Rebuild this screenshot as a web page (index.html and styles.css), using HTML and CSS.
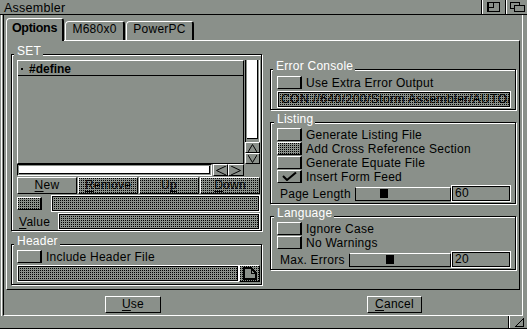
FILE: index.html
```html
<!DOCTYPE html>
<html lang="en">
<head>
    <meta charset="UTF-8">
    <meta name="viewport" content="width=device-width, initial-scale=1.0">
    <title>Assembler</title>
    <link rel="stylesheet" href="styles.css">
</head>
<body>

<div class="window">
    <div class="titlebar">
        <div class="title">Assembler</div>
        <div class="gadget zoom">
            <svg width="13" height="10" viewBox="0 0 13 10" shape-rendering="crispEdges">
                <rect x="0.5" y="0.5" width="12" height="9" fill="none" stroke="#000"/>
                <rect x="0.5" y="0.5" width="6" height="5" fill="none" stroke="#000"/>
                <line x1="1.5" y1="1" x2="1.5" y2="9" stroke="#000"/>
            </svg>
        </div>
        <div class="gadget depth">
            <svg width="15" height="10" viewBox="0 0 15 10" shape-rendering="crispEdges">
                <rect x="0.5" y="0.5" width="9" height="6" fill="none" stroke="#000"/>
                <rect x="4.5" y="3.5" width="10" height="6" fill="#8a908a" stroke="#000"/>
            </svg>
        </div>
    </div>

    <div class="client">
        <div class="content">
            <div class="tabs">
                <div class="tab active">Options</div>
                <div class="tab t2">M680x0</div>
                <div class="tab t3">PowerPC</div>
            </div>

            <div class="panel">
                <!-- left column -->
                <div class="col">
                    <div class="group-title">SET</div>
                    <div class="group set">
                        <div class="listarea">
                            <div class="list">
                                <div class="list-head"><span class="dot"></span>#define</div>
                            </div>
                            <div class="vscroll">
                                <div class="vtrack"><div class="vknob"></div></div>
                                <div class="arrow">
                                    <svg width="9" height="8" viewBox="0 0 9 8"><polyline points="0,8 4.5,0.5 9,8" fill="none" stroke="#000"/></svg>
                                </div>
                                <div class="arrow">
                                    <svg width="9" height="8" viewBox="0 0 9 8"><polyline points="0,0 4.5,7.5 9,0" fill="none" stroke="#000"/></svg>
                                </div>
                            </div>
                            <div class="hscroll"><div class="hknob"></div></div>
                            <div class="arrow left">
                                <svg width="10" height="9" viewBox="0 0 10 9"><polyline points="10,0 0.5,4.5 10,9" fill="none" stroke="#000"/></svg>
                            </div>
                            <div class="arrow right">
                                <svg width="10" height="9" viewBox="0 0 10 9"><polyline points="0,0 9.5,4.5 0,9" fill="none" stroke="#000"/></svg>
                            </div>
                        </div>

                        <div class="btnrow">
                            <div class="btn"><u>N</u>ew</div>
                            <div class="btn dim"><u>R</u>emove</div>
                            <div class="btn dim">U<u>p</u></div>
                            <div class="btn dim"><u>D</u>own</div>
                        </div>

                        <div class="frow">
                            <div class="check dim"></div>
                            <div class="field dim wide"></div>
                        </div>
                        <div class="frow">
                            <div class="flabel"><u>V</u>alue</div>
                            <div class="field dim"></div>
                        </div>
                    </div>

                    <div class="group-title gap">Header</div>
                    <div class="group header">
                        <div class="crow">
                            <div class="check"></div>
                            <span>Include Header File</span>
                        </div>
                        <div class="frow pop">
                            <div class="field dim"></div>
                            <div class="popbtn dim">
                                <svg width="14" height="13" viewBox="0 0 14 13" shape-rendering="crispEdges">
                                    <path d="M1 1 H8 L13 6 V12 H1 Z" fill="#8a908a" stroke="#000" stroke-width="2"/>
                                    <path d="M8 1 V6 H13" fill="none" stroke="#000" stroke-width="1"/>
                                </svg>
                            </div>
                        </div>
                    </div>
                </div>

                <!-- right column -->
                <div class="col">
                    <div class="group-title">Error Console</div>
                    <div class="group rgroup errors">
                        <div class="crow">
                            <div class="check"></div>
                            <span>Use Extra Error Output</span>
                        </div>
                        <div class="field dim con">CON://640/200/Storm Assembler/AUTO/</div>
                    </div>

                    <div class="group-title gap-r">Listing</div>
                    <div class="group rgroup listing">
                        <div class="crow">
                            <div class="check"></div>
                            <span>Generate Listing File</span>
                        </div>
                        <div class="crow">
                            <div class="check dim"></div>
                            <span>Add Cross Reference Section</span>
                        </div>
                        <div class="crow">
                            <div class="check"></div>
                            <span>Generate Equate File</span>
                        </div>
                        <div class="crow">
                            <div class="check">
                                <svg width="15" height="9" viewBox="0 0 15 9"><polyline points="1,4 5,8 14,0.5" fill="none" stroke="#000" stroke-width="2"/></svg>
                            </div>
                            <span>Insert Form Feed</span>
                        </div>
                        <div class="srow">
                            <span class="slabel">Page Length</span>
                            <div class="slider"><div class="knob" style="margin-left: 24px"></div></div>
                            <div class="field num">60</div>
                        </div>
                    </div>

                    <div class="group-title gap-r">Language</div>
                    <div class="group rgroup language">
                        <div class="crow">
                            <div class="check"></div>
                            <span>Ignore Case</span>
                        </div>
                        <div class="crow">
                            <div class="check"></div>
                            <span>No Warnings</span>
                        </div>
                        <div class="srow">
                            <span class="slabel">Max. Errors</span>
                            <div class="slider"><div class="knob" style="margin-left: 36px"></div></div>
                            <div class="field num">20</div>
                        </div>
                    </div>
                </div>
            </div>

            <div class="actions">
                <div class="btn use"><u>U</u>se</div>
                <div class="btn cancel"><u>C</u>ancel</div>
            </div>
        </div>
    </div>

    <div class="bottombar">
        <div class="sizer">
            <svg width="9" height="9" viewBox="0 0 9 9" shape-rendering="crispEdges"><path d="M0.5 8.5 H8.5 V0.5 Z" fill="none" stroke="#000"/></svg>
        </div>
    </div>
</div>

</body>
</html>
```

FILE: styles.css
```css
* {
    box-sizing: border-box;
}

body {
    margin: 0;
    background-color: #8a908a;
    font-family: "Liberation Sans", Arial, sans-serif;
    font-size: 12px;
    line-height: 12px;
    letter-spacing: 0.25px;
    color: #000;
}

u {
    text-decoration-thickness: 1px;
    text-underline-offset: 2px;
}

.window {
    width: 527px;
    height: 329px;
    overflow: hidden;
}

/* title bar */
.titlebar {
    display: flex;
    height: 15px;
    border-bottom: 1px solid #000;
}

.title {
    flex: 1;
    padding: 2px 0 0 4px;
    font-size: 12.5px;
}

.gadget {
    display: flex;
    align-items: center;
    justify-content: center;
    border-left: 1px solid #000;
    box-shadow: inset 1px 0 #fff;
}

.gadget.zoom {
    width: 24px;
}

.gadget.depth {
    width: 22px;
    padding-left: 1px;
}

/* window body */
.client {
    display: flex;
    height: 301px;
    margin-left: 1px;
    border-left: 1px solid #fff;
    padding: 0 4px 0 1px;
}

.content {
    flex: 1;
    display: flex;
    flex-direction: column;
    border-left: 1px solid #000;
    border-right: 1px solid #fff;
    border-bottom: 1px solid #fff;
    padding: 3px 0 0 0;
}

/* tabs */
.tabs {
    display: flex;
    align-items: flex-end;
    gap: 1px;
    height: 22px;
    margin: 0 2px;
}

.tab {
    height: 19px;
    border: 1px solid #fff;
    border-right: 2px solid #000;
    border-bottom: 0;
    border-radius: 4px 3px 0 0;
    padding-top: 1px;
    text-align: center;
}

.tab.active {
    position: relative;
    z-index: 1;
    width: 58px;
    height: 23px;
    margin-bottom: -1px;
    padding-top: 3px;
    background-color: #8a908a;
    font-weight: bold;
    font-size: 12.5px;
    letter-spacing: -0.3px;
}

.tab.t2 {
    width: 60px;
}

.tab.t3 {
    width: 68px;
}

.panel {
    display: grid;
    grid-template-columns: 251px 246px;
    column-gap: 8px;
    height: 250px;
    margin: 0 2px;
    padding: 0 3px 0 4px;
    border: 1px solid;
    border-color: #fff #000 #000 #fff;
}

.col {
    display: flex;
    flex-direction: column;
    align-self: center;
}

/* groups */
.group-title {
    position: relative;
    z-index: 1;
    align-self: flex-start;
    height: 12px;
    margin: 0 0 -3px 3px;
    padding: 0 2px 0 3px;
    background-color: #8a908a;
    color: #fff;
}

.group-title.gap {
    margin-top: 4px;
}

.group-title.gap-r {
    margin-top: 3px;
    margin-left: 4px;
}

.group {
    display: flex;
    flex-direction: column;
    border: 1px solid #000;
    box-shadow: inset 1px 1px #fff, 1px 1px #fff;
}

.group.set {
    height: 177px;
    padding: 5px 1px 0 5px;
    gap: 1px;
}

.group.header {
    height: 41px;
    padding: 5px 1px 2px 5px;
    gap: 2px;
}

.rgroup {
    padding: 5px 4px 2px 6px;
    gap: 1px;
}

.group.errors {
    height: 41px;
    padding-top: 6px;
}

.group.listing {
    height: 82px;
}

.group.language {
    height: 54px;
}

/* list */
.listarea {
    display: grid;
    grid-template-columns: 195px 1px 15px 16px 1px 15px;
    grid-template-rows: 104px 12px;
}

.list {
    grid-column: 1 / 5;
    border: 1px solid;
    border-color: #fff #000 #000 #fff;
}

.list-head {
    display: flex;
    align-items: center;
    height: 15px;
    border-bottom: 1px solid #000;
    padding-top: 1px;
    font-weight: bold;
    letter-spacing: 0;
}

.dot {
    width: 2px;
    height: 2px;
    margin: 0 6px 0 3px;
    background-color: #000;
}

.vscroll {
    grid-column: 6;
    display: flex;
    flex-direction: column;
}

.vtrack {
    flex: 1;
    display: flex;
    border-left: 1px solid #000;
    border-right: 1px solid #fff;
    padding: 0 1px 3px 1px;
}

.vknob {
    flex: 1;
    background-color: #fff;
    border-right: 1px solid #000;
    border-bottom: 1px solid #000;
}

.vscroll .arrow {
    height: 11px;
}

.hscroll {
    grid-column: 1;
    display: flex;
    border: 1px solid;
    border-color: #000 #fff #fff #000;
    padding: 1px;
}

.hknob {
    flex: 1;
    background-color: #fff;
    border-right: 1px solid #000;
    border-bottom: 1px solid #000;
}

.arrow {
    display: flex;
    align-items: center;
    justify-content: center;
    border: 1px solid;
    border-color: #fff #000 #000 #fff;
}

.arrow.left {
    grid-column: 3;
}

.arrow.right {
    grid-column: 4;
}

/* buttons */
.btnrow {
    display: grid;
    grid-template-columns: repeat(4, 1fr);
    gap: 1px;
}

.btn {
    height: 17px;
    border: 1px solid;
    border-color: #fff #000 #000 #fff;
    padding-top: 1px;
    text-align: center;
}

/* disabled look: black dot grid over the grey */
.dim {
    background: #8a908a url("data:image/svg+xml,%3Csvg xmlns='http://www.w3.org/2000/svg' width='2' height='2' shape-rendering='crispEdges'%3E%3Crect width='1' height='1'/%3E%3C/svg%3E") 0 0 / 2px 2px;
}

.actions {
    display: flex;
    margin-top: 6px;
}

.btn.use {
    width: 56px;
    margin-left: 101px;
}

.btn.cancel {
    width: 55px;
    margin-left: 206px;
}

/* form rows */
.frow {
    display: flex;
    align-items: center;
    height: 17px;
}

.frow .wide {
    margin-left: 9px;
}

.flabel {
    width: 41px;
    padding-left: 2px;
}

.crow {
    display: flex;
    align-items: center;
    gap: 4px;
    height: 13px;
}

.check {
    display: flex;
    align-items: center;
    justify-content: center;
    flex: none;
    width: 25px;
    height: 13px;
    border: 1px solid;
    border-color: #fff #000 #000 #fff;
    border-right-width: 2px;
}

.field {
    flex: 1;
    height: 17px;
    border: 1px solid #fff;
    box-shadow: inset 0 0 0 1px #000;
    padding: 1px 2px 0 3px;
    white-space: nowrap;
    overflow: hidden;
}

.field.con {
    flex: none;
    margin-top: 1px;
    letter-spacing: 0.45px;
}

.popbtn {
    display: flex;
    align-items: center;
    justify-content: center;
    width: 21px;
    height: 17px;
    border: 1px solid;
    border-color: #fff #000 #000 #fff;
}

.srow {
    display: flex;
    align-items: center;
    height: 17px;
    margin-top: 1px;
}

.slabel {
    margin: 0 4px 0 3px;
}

.slider {
    flex: 1;
    height: 14px;
    border: 1px solid #000;
    border-top-color: #fff;
    padding-top: 1px;
}

.knob {
    width: 8px;
    height: 9px;
    background-color: #000;
}

.field.num {
    flex: none;
    width: 60px;
}

/* bottom border */
.bottombar {
    display: flex;
    justify-content: flex-end;
    height: 13px;
    border-bottom: 1px solid #000;
}

.sizer {
    display: flex;
    align-items: center;
    justify-content: center;
    width: 19px;
    border-left: 1px solid #000;
    box-shadow: inset 1px 0 #fff;
    padding-left: 2px;
}
```
